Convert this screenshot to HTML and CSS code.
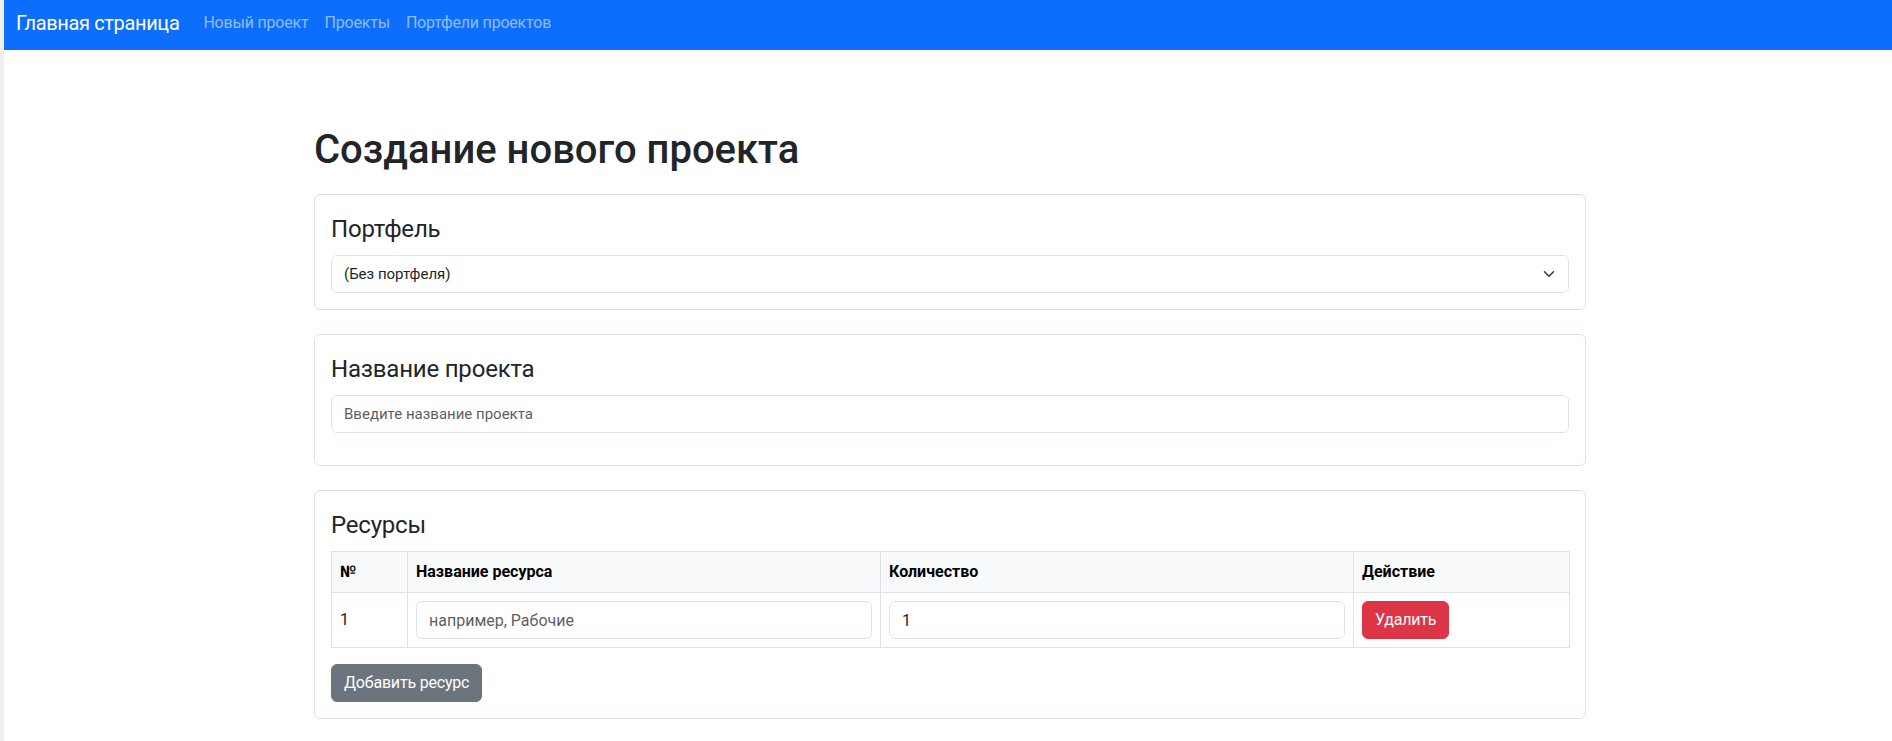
FILE: index.html
```html
<!DOCTYPE html>
<html lang="ru">
<head>
<meta charset="utf-8">
<title>Создание нового проекта</title>
<link rel="stylesheet" href="styles.css">
</head>
<body>
<div class="page">
  <nav class="navbar">
    <a class="brand" href="#">Главная страница</a>
    <ul class="nav">
      <li><a class="nav-link" href="#">Новый проект</a></li>
      <li><a class="nav-link" href="#">Проекты</a></li>
      <li><a class="nav-link" href="#">Портфели проектов</a></li>
    </ul>
  </nav>
  <main class="main">
    <div class="container">
      <h1 class="title">Создание нового проекта</h1>

      <section class="card">
        <label class="card-label" for="portfolio">Портфель</label>
        <div class="select-wrap">
          <select id="portfolio" class="form-select">
            <option>(Без портфеля)</option>
          </select>
          <svg class="chevron" viewBox="0 0 16 16" width="16" height="12" aria-hidden="true">
            <path d="m2 5 6 6 6-6" fill="none" stroke="#343a40" stroke-width="2" stroke-linecap="round" stroke-linejoin="round"/>
          </svg>
        </div>
      </section>

      <section class="card">
        <label class="card-label" for="pname">Название проекта</label>
        <input id="pname" class="form-control form-control-card spaced" type="text" placeholder="Введите название проекта">
      </section>

      <section class="card">
        <h2 class="card-label">Ресурсы</h2>
        <table class="table">
          <colgroup>
            <col class="col-num">
            <col class="col-name">
            <col class="col-qty">
            <col class="col-act">
          </colgroup>
          <thead>
            <tr>
              <th>№</th>
              <th>Название ресурса</th>
              <th>Количество</th>
              <th>Действие</th>
            </tr>
          </thead>
          <tbody>
            <tr>
              <td>1</td>
              <td><input class="form-control" type="text" placeholder="например, Рабочие"></td>
              <td><input class="form-control" type="text" value="1"></td>
              <td><button class="btn btn-danger" type="button">Удалить</button></td>
            </tr>
          </tbody>
        </table>
        <button class="btn btn-secondary" type="button">Добавить ресурс</button>
      </section>
    </div>
  </main>
</div>
</body>
</html>
```

FILE: styles.css
```css
* {
  box-sizing: border-box;
}

html, body {
  margin: 0;
  padding: 0;
}

body {
  background: #efefef;
  font-family: Roboto, "Noto Sans", "Liberation Sans", sans-serif;
  font-size: 16px;
  line-height: 1.5;
  color: #212529;
}

.page {
  margin-left: 4px;
  background: #ffffff;
  min-height: 100vh;
}

/* Navbar */
.navbar {
  height: 50px;
  background: #0d6efd;
  display: flex;
  align-items: center;
  padding: 0 12px 4px 12px;
}

.brand {
  font-size: 20px;
  line-height: 30px;
  letter-spacing: -0.35px;
  color: #ffffff;
  text-decoration: none;
  margin-right: 16px;
}

.nav {
  list-style: none;
  margin: 0;
  padding: 0;
  display: flex;
}

.nav-link {
  display: block;
  padding: 8px;
  color: rgba(255, 255, 255, 0.55);
  text-decoration: none;
  line-height: 24px;
  letter-spacing: -0.2px;
}

/* Main */
.main {
  padding-left: 4px;
}

.container {
  width: 1272px;
  margin: 0 auto;
}

.title {
  font-size: 40px;
  font-weight: 500;
  line-height: 1.2;
  margin: 76px 0 20px 0;
}

.card {
  border: 1px solid #dee2e6;
  border-radius: 6px;
  padding: 16px;
  margin-bottom: 24px;
  background: #fff;
}

.card-label {
  display: block;
  font-size: 24px;
  font-weight: 400;
  line-height: 36px;
  letter-spacing: -0.2px;
  margin: 0 0 8px 0;
}

.select-wrap {
  position: relative;
}

.form-select,
.form-control {
  display: block;
  width: 100%;
  height: 38px;
  padding: 6px 12px;
  font-family: inherit;
  font-size: 16px;
  line-height: 24px;
  color: #212529;
  background: #fff;
  border: 1px solid #dee2e6;
  border-radius: 6px;
  outline: none;
}

.form-select {
  appearance: none;
  -webkit-appearance: none;
  padding-right: 36px;
}

.form-control-card,
.form-select {
  font-size: 15px;
}

.form-control::placeholder {
  color: rgba(33, 37, 41, 0.75);
}

.spaced {
  margin-bottom: 16px;
}

.chevron {
  position: absolute;
  right: 12px;
  top: 13px;
  pointer-events: none;
}

/* Table */
.table {
  width: 100%;
  border-collapse: collapse;
  table-layout: fixed;
  margin-bottom: 16px;
  border: 1px solid #dee2e6;
}

.col-num { width: 76px; }
.col-name { width: 473px; }
.col-qty { width: 473px; }
.col-act { width: 216px; }

.table th,
.table td {
  border: 1px solid #dee2e6;
  padding: 8px;
  text-align: left;
  vertical-align: middle;
}

.table th {
  background: #f8f9fa;
  color: #000;
  font-weight: 700;
}

/* Buttons */
.btn {
  display: inline-block;
  padding: 6px 12px;
  font-family: inherit;
  font-size: 16px;
  line-height: 24px;
  letter-spacing: -0.2px;
  border-radius: 6px;
  border: 1px solid transparent;
  color: #fff;
  cursor: pointer;
}

.btn-danger {
  background: #dc3545;
  border-color: #dc3545;
}

.btn-secondary {
  background: #6c757d;
  border-color: #6c757d;
}
```
